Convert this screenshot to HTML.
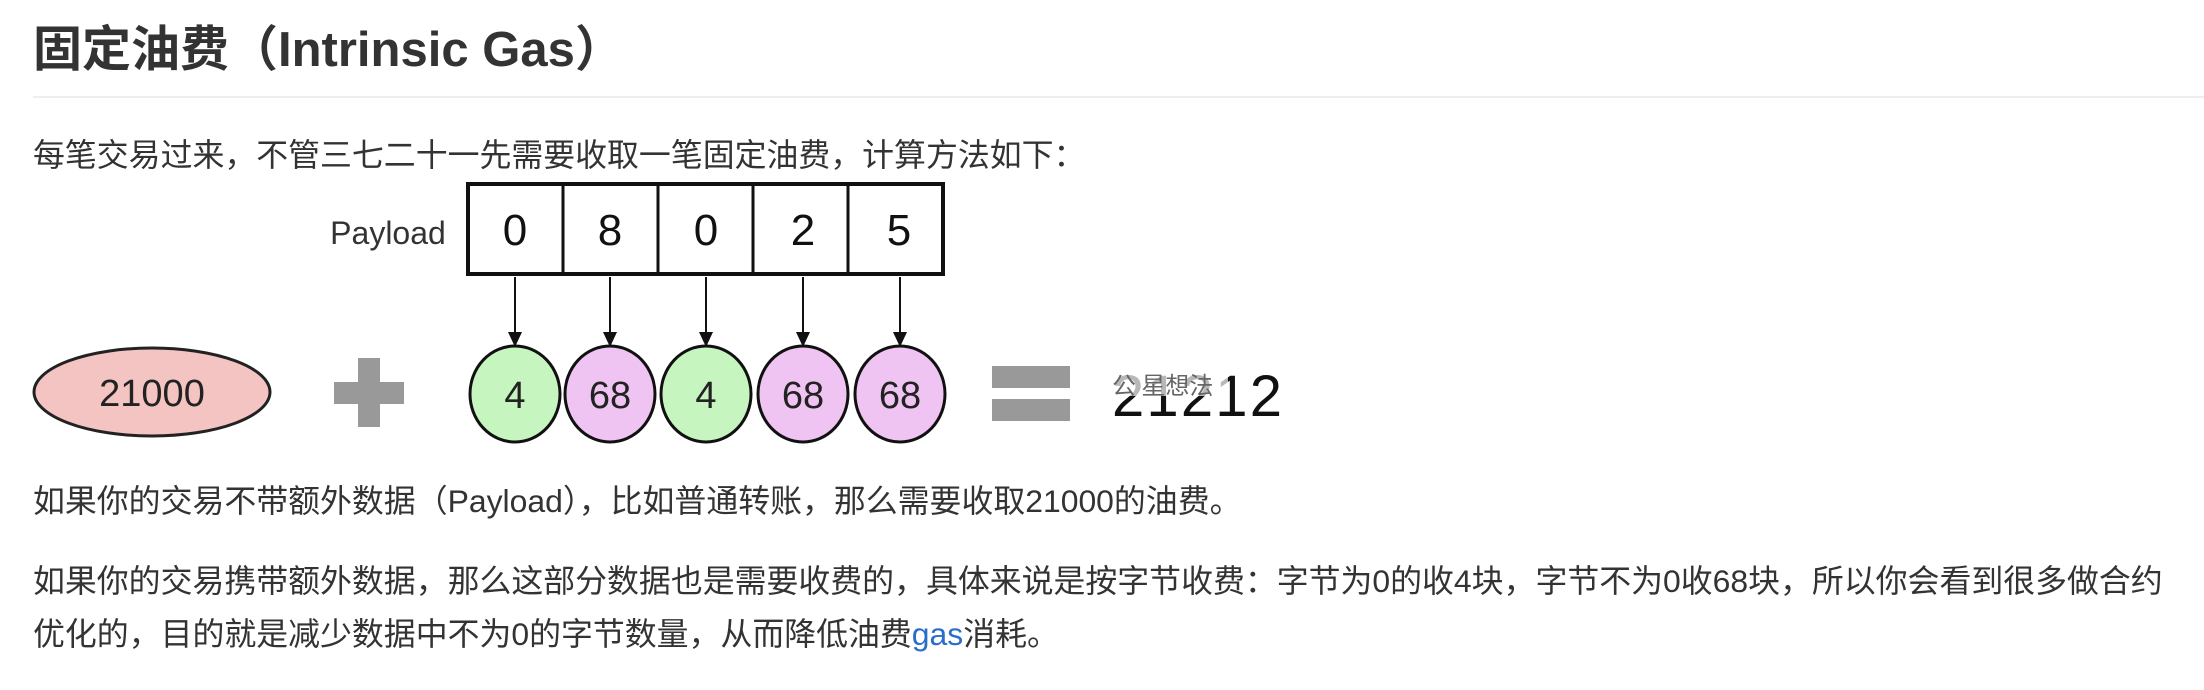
<!DOCTYPE html>
<html><head><meta charset="utf-8"><style>
html,body{margin:0;padding:0;background:#fff;width:2204px;height:690px;overflow:hidden}
.t{position:absolute;left:33px;white-space:nowrap;color:#333;font-family:"Liberation Sans","Noto Sans CJK SC",sans-serif}
h1{position:absolute;left:33px;top:18px;margin:0;font-size:49px;font-weight:bold;color:#333;font-family:"Liberation Sans","Noto Sans CJK SC",sans-serif;white-space:nowrap;line-height:64px}
.hr{position:absolute;left:33px;right:0;top:96px;height:2px;background:#eee}
.p{font-size:31.9px;line-height:52px}
a{color:#2a6ecb;text-decoration:none}
</style></head><body>
<h1>固定油费（Intrinsic Gas）</h1>
<div class="hr"></div>
<div class="t p" style="top:129px">每笔交易过来，不管三七二十一先需要收取一笔固定油费，计算方法如下：</div>
<svg style="position:absolute;left:0;top:0" width="2204" height="690" font-family="Liberation Sans, sans-serif">
<text x="388" y="244" font-size="32" text-anchor="middle" fill="#333">Payload</text>
<rect x="468" y="184" width="475" height="90" fill="#fff" stroke="#111" stroke-width="4"/>
<g stroke="#111" stroke-width="3"><line x1="563" y1="184" x2="563" y2="274"/><line x1="658" y1="184" x2="658" y2="274"/><line x1="753" y1="184" x2="753" y2="274"/><line x1="848" y1="184" x2="848" y2="274"/></g>
<g font-size="44" text-anchor="middle" fill="#111"><text x="515" y="245">0</text><text x="610" y="245">8</text><text x="706" y="245">0</text><text x="803" y="245">2</text><text x="899" y="245">5</text></g>
<g stroke="#111" stroke-width="2">
<line x1="515" y1="277" x2="515" y2="335"/><line x1="610" y1="277" x2="610" y2="335"/><line x1="706" y1="277" x2="706" y2="335"/><line x1="803" y1="277" x2="803" y2="335"/><line x1="900" y1="277" x2="900" y2="335"/></g>
<g fill="#111"><path d="M508 332h14l-7 15z"/><path d="M603 332h14l-7 15z"/><path d="M699 332h14l-7 15z"/><path d="M796 332h14l-7 15z"/><path d="M893 332h14l-7 15z"/></g>
<ellipse cx="152" cy="392" rx="118" ry="44" fill="#f4c4c2" stroke="#222" stroke-width="3"/>
<text x="152" y="406" font-size="38" text-anchor="middle" fill="#222">21000</text>
<rect x="334" y="382" width="70" height="22" fill="#999"/><rect x="358" y="358" width="22" height="69" fill="#999"/>
<g stroke="#111" stroke-width="3">
<ellipse cx="515" cy="394" rx="45" ry="48" fill="#c6f5c0"/>
<ellipse cx="610" cy="394" rx="45" ry="48" fill="#f0c4f2"/>
<ellipse cx="706" cy="394" rx="45" ry="48" fill="#c6f5c0"/>
<ellipse cx="803" cy="394" rx="45" ry="48" fill="#f0c4f2"/>
<ellipse cx="900" cy="394" rx="45" ry="48" fill="#f0c4f2"/></g>
<g font-size="38" text-anchor="middle" fill="#222"><text x="515" y="408">4</text><text x="610" y="408">68</text><text x="706" y="408">4</text><text x="803" y="408">68</text><text x="900" y="408">68</text></g>
<rect x="992" y="366" width="78" height="22" fill="#999"/><rect x="992" y="399" width="78" height="22" fill="#999"/>
<text x="1112" y="416" font-size="58" fill="#111" textLength="170">21212</text>
<rect x="1108" y="370" width="120" height="26" fill="#fff" opacity="0.7"/>
<text x="1112" y="394" font-size="24" fill="#666" font-family="Noto Sans CJK SC, sans-serif">公 星想法</text>
</svg>
<div class="t p" style="top:475px">如果你的交易不带额外数据（Payload），比如普通转账，那么需要收取21000的油费。</div>
<div class="t p" style="top:555px">如果你的交易携带额外数据，那么这部分数据也是需要收费的，具体来说是按字节收费：字节为0的收4块，字节不为0收68块，所以你会看到很多做合约</div>
<div class="t p" style="top:608px">优化的，目的就是减少数据中不为0的字节数量，从而降低油费<a>gas</a>消耗。</div>
</body></html>
